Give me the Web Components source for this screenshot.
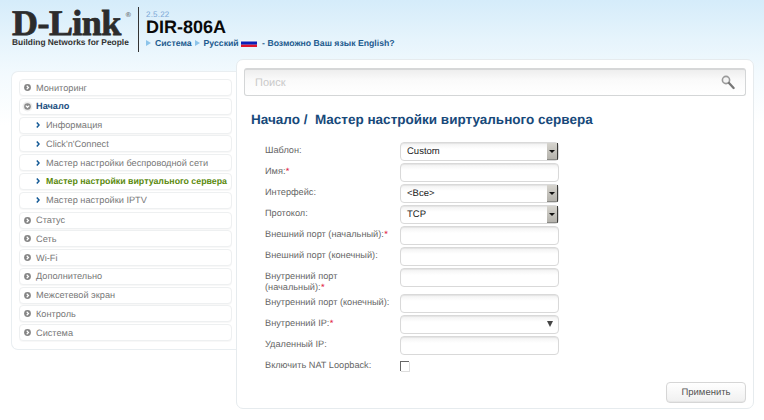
<!DOCTYPE html>
<html lang="ru"><head><meta charset="utf-8"><title>D-Link DIR-806A</title>
<style>
html,body{margin:0;padding:0;height:100%;overflow:hidden}
body{width:764px;height:420px;font-family:"Liberation Sans",Arial,sans-serif;font-size:10px;text-rendering:geometricPrecision;background:linear-gradient(180deg,#d5ecfa 0,#e6f4fc 40px,#f3fafe 75px,#fff 125px)}
</style></head><body>
<dl-page>
  <dl-header slot="header"></dl-header>
  <dl-sidebar slot="side">
    <dl-item>Мониторинг</dl-item>
    <dl-item open>Начало</dl-item>
    <dl-item sub>Информация</dl-item>
    <dl-item sub>Click'n'Connect</dl-item>
    <dl-item sub>Мастер настройки беспроводной сети</dl-item>
    <dl-item sub active>Мастер настройки виртуального сервера</dl-item>
    <dl-item sub last>Мастер настройки IPTV</dl-item>
    <dl-item>Статус</dl-item>
    <dl-item>Сеть</dl-item>
    <dl-item>Wi-Fi</dl-item>
    <dl-item>Дополнительно</dl-item>
    <dl-item>Межсетевой экран</dl-item>
    <dl-item>Контроль</dl-item>
    <dl-item>Система</dl-item>
  </dl-sidebar>
  <dl-main slot="main">
    <dl-search></dl-search>
    <dl-title>Начало /&nbsp; Мастер настройки виртуального сервера</dl-title>
    <dl-form>
      <dl-field label="Шаблон:"><dl-control kind="select" value="Custom"></dl-control></dl-field>
      <dl-field label="Имя:" req><dl-control></dl-control></dl-field>
      <dl-field label="Интерфейс:"><dl-control kind="select" value="&lt;Все&gt;"></dl-control></dl-field>
      <dl-field label="Протокол:"><dl-control kind="select" value="TCP"></dl-control></dl-field>
      <dl-field label="Внешний порт (начальный):" req><dl-control></dl-control></dl-field>
      <dl-field label="Внешний порт (конечный):"><dl-control></dl-control></dl-field>
      <dl-field label="Внутренний порт (начальный):" req tall><dl-control></dl-control></dl-field>
      <dl-field label="Внутренний порт (конечный):"><dl-control></dl-control></dl-field>
      <dl-field label="Внутренний IP:" req><dl-control kind="combo"></dl-control></dl-field>
      <dl-field label="Удаленный IP:"><dl-control></dl-control></dl-field>
      <dl-field label="Включить NAT Loopback:"><dl-control kind="check"></dl-control></dl-field>
    </dl-form>
    <dl-button>Применить</dl-button>
  </dl-main>
</dl-page>
<script>
const def=(name,css,html)=>{customElements.define(name,class extends HTMLElement{
  constructor(){super();this.attachShadow({mode:'open'});}
  connectedCallback(){const h=typeof html==='function'?html(this):html;this.shadowRoot.innerHTML=`<style>${css}</style>${h}`;}
});};
def('dl-page',`:host{display:block;width:764px;height:420px;box-sizing:border-box}
 .row{display:flex;padding-left:11px;align-items:flex-start}`,
 `<slot name="header"></slot><div class="row"><slot name="side"></slot><slot name="main"></slot></div>`);
def('dl-header',`:host{display:flex;height:59px;box-sizing:border-box;padding:7px 0 0 12px;color:#000}
 .logo{width:117px;display:flex;flex-direction:column;position:relative;padding-top:1px}
 .dl{font:bold 36px/30px "Liberation Serif",serif;color:#2c2c2c;-webkit-text-stroke:.8px #2c2c2c;letter-spacing:-.55px;white-space:nowrap;height:29px}
 .tag{font:bold 8.4px/11px "Liberation Sans",sans-serif;color:#333;white-space:nowrap}
 .r{position:absolute;right:-2px;top:5px;font:7px/8px "Liberation Sans",sans-serif;color:#444}
 .sep{width:1px;height:45px;background:#333;margin:0 7px 0 9px}
 .info{display:flex;flex-direction:column;padding-top:4px}
 .ver{font:8px/8px "Liberation Sans",sans-serif;color:#7aa6d6;letter-spacing:.2px}
 .model{font:bold 18px/17px "Liberation Sans",sans-serif;color:#0a0a0a}
 .nav{display:flex;align-items:center;font:bold 8.7px/12px "Liberation Sans",sans-serif;color:#1c5a8e;margin-top:1px;white-space:nowrap}
 .tri{width:0;height:0;border-left:5px solid #8cc4ea;border-top:3px solid transparent;border-bottom:3px solid transparent;margin-right:4px}
 .nav span+.tri{margin-left:3px}
 svg{margin:0 3px 0 2px;display:block}`,
 `<div class="logo"><div class="dl">D-Link</div><div class="tag">Building Networks for People</div><div class="r">®</div></div>
  <div class="sep"></div>
  <div class="info"><div class="ver">2.5.22</div><div class="model">DIR-806A</div>
  <div class="nav"><i class="tri"></i><span>Система</span><i class="tri"></i><span>Русский</span>
  <svg width="16" height="7" viewBox="0 0 16 7"><rect width="16" height="1.6" fill="#f4f4f6"/><rect y="1.5" width="16" height="3.2" fill="#0b1fb8"/><rect y="4.7" width="16" height="2.3" fill="#e0162b"/></svg>
  <span>&nbsp;- Возможно Ваш язык English?</span></div></div>`);
def('dl-sidebar',`:host{display:flex;flex-direction:column;gap:1.75px;box-sizing:border-box;width:225px;height:279px;margin-top:12px;padding:7px 4px 0 7px;background:#fff;border:1px solid #e9eef1;border-right:0;border-radius:7px 0 0 7px}`,`<slot></slot>`);
def('dl-item',`:host{display:flex;align-items:center;box-sizing:border-box;height:17px;flex:none;border:1px solid #eef0f1;border-radius:4px;background:#fff;color:#777;font:9.2px/12px "Liberation Sans",sans-serif;white-space:nowrap;padding-left:4px;box-shadow:0 1px 1px rgba(0,0,0,.03)}
 :host([open]){color:#1d4f7f;font-weight:bold}
 :host([sub]){padding-left:16px}
 :host([active]){color:#5a8a0c;font-weight:bold;font-size:8.8px}
 :host([last]){margin-bottom:1.3px}
 svg{flex:none;display:block}
 .t{margin-left:5px}
 :host([sub]) .t{margin-left:6px}`,
 el=>{
  let ic;
  if(el.hasAttribute('sub')) ic=`<svg width="4" height="6" viewBox="0 0 4 6"><path d="M.8.6 3 3 .8 5.4" fill="none" stroke="#145a96" stroke-width="1.5"/></svg>`;
  else if(el.hasAttribute('open')) ic=`<svg width="7" height="7" viewBox="0 0 7 7" style="overflow:visible"><circle cx="3.5" cy="3.5" r="5" fill="#eee"/><circle cx="3.5" cy="3.5" r="3.3" fill="#8a8a8a"/><path d="M1.8 2.7 3.5 4.5 5.2 2.7" fill="none" stroke="#fff" stroke-width="1.2"/></svg>`;
  else ic=`<svg width="7" height="7" viewBox="0 0 7 7"><circle cx="3.5" cy="3.5" r="3.4" fill="#858585"/><path d="M2.7 1.8 4.5 3.5 2.7 5.2" fill="none" stroke="#fff" stroke-width="1.2"/></svg>`;
  return ic+`<span class="t"><slot></slot></span>`;
 });
def('dl-main',`:host{display:flex;flex-direction:column;box-sizing:border-box;width:518px;height:350px;background:#fff;border:1px solid #e6ebee;border-radius:7px;padding:8px 7px 0 7px}`,`<slot></slot>`);
def('dl-search',`:host{display:flex;align-items:center;justify-content:space-between;box-sizing:border-box;height:28px;flex:none;border:1px solid #d4d6d7;border-top:2px solid #d6d7d8;border-radius:3px;background:linear-gradient(180deg,#eeeeee,#fafafa 40%,#fff);padding:0 10px 0 10px;color:#c9c9c9;font:11px "Liberation Sans",sans-serif}
 svg{display:block}`,
 `<span>Поиск</span><svg width="14" height="15" viewBox="0 0 14 15"><circle cx="5" cy="5" r="3.6" fill="#f5f5f5" stroke="#9a9a9a" stroke-width="1.6"/><path d="M8 8 12.6 13" stroke="#777" stroke-width="2.3" stroke-linecap="round"/></svg>`);
def('dl-title',`:host{display:block;margin:15px 0 0 7px;font:bold 13.5px/17px "Liberation Sans",sans-serif;color:#17497a;white-space:nowrap}`,`<slot></slot>`);
def('dl-form',`:host{display:flex;flex-direction:column;gap:2px;margin:14px 0 0 21px}`,`<slot></slot>`);
def('dl-field',`:host{display:flex;height:19px;flex:none;color:#666;font:9.2px/11px "Liberation Sans",sans-serif}
 :host([tall]){height:24px}
 .l{width:135px;padding-top:2.5px;box-sizing:border-box;padding-right:4px}
 b{color:#e0143c;font-weight:normal;margin-left:.4px}`,
 el=>`<div class="l">${el.getAttribute('label')}${el.hasAttribute('req')?'<b>*</b>':''}</div><slot></slot>`);
def('dl-control',`:host{display:flex;align-items:center;box-sizing:border-box;width:159px;height:19px;border:1px solid #d9d9d9;border-radius:4px;background:linear-gradient(180deg,#f1f1f1,#fff 35%);box-shadow:inset 0 1px 1px rgba(0,0,0,.06);font:9.5px "Liberation Sans",sans-serif;color:#222;padding-left:6px;position:relative}
 :host([kind=check]){width:9px;height:10px;padding:0;margin-top:4px;border:1px solid #666;border-width:1px 0 0 1px;border-radius:0;background:#fff;box-shadow:1px 1px 0 #ddd}
 .btn{position:absolute;right:0;top:0;bottom:0;width:11px;box-sizing:border-box;background:linear-gradient(180deg,#d6d4ce,#b4b2ac);border-right:1.5px solid #3a3a38;border-bottom:1px solid #8a8a86;display:flex;align-items:center;justify-content:center}
 .btn i{width:0;height:0;border-top:3px solid #111;border-left:3px solid transparent;border-right:3px solid transparent}
 .dn{position:absolute;right:5px;top:5px;width:0;height:0;border-top:6px solid #444;border-left:3.5px solid transparent;border-right:3.5px solid transparent}`,
 el=>{const k=el.getAttribute('kind');const v=(el.getAttribute('value')||'').replace(/</g,'&lt;');
  if(k==='select')return `<span>${v}</span><div class="btn"><i></i></div>`;
  if(k==='combo')return `<div class="dn"></div>`;
  return '';});
def('dl-button',`:host{display:flex;align-items:center;justify-content:center;align-self:flex-end;box-sizing:border-box;width:80px;height:21px;margin-top:6px;border:1px solid #d6d6d6;border-radius:4px;background:linear-gradient(180deg,#fff,#f0f0f0);box-shadow:inset 0 -1px 1px rgba(0,0,0,.04);color:#555;font:9.5px "Liberation Sans",sans-serif}`,`<slot></slot>`);
</script>
</body></html>
